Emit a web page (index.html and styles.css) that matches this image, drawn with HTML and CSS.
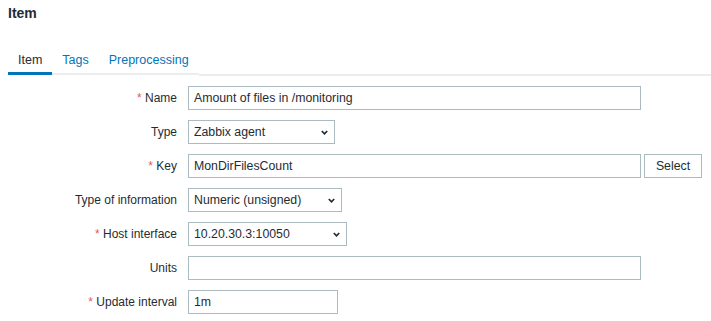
FILE: index.html
```html
<!DOCTYPE html>
<html>
<head>
<meta charset="utf-8">
<link rel="stylesheet" href="styles.css">
</head>
<body>
<h1 class="title">Item</h1>
<nav class="tabs">
  <span class="tab active">Item</span>
  <span class="tab">Tags</span>
  <span class="tab">Preprocessing</span>
  <span class="tab-rest"></span>
</nav>
<form class="form">
  <label class="label"><span class="req">*</span> Name</label>
  <div class="field"><div class="input w-std">Amount of files in /monitoring</div></div>

  <label class="label">Type</label>
  <div class="field"><div class="select w-type"><span>Zabbix agent</span><svg class="chev" width="7" height="5" viewBox="0 0 7 5"><path d="M0.8 1 L3.5 3.8 L6.2 1" fill="none" stroke="#1f2c33" stroke-width="1.7"/></svg></div></div>

  <label class="label"><span class="req">*</span> Key</label>
  <div class="field"><div class="input w-std">MonDirFilesCount</div><div class="btn">Select</div></div>

  <label class="label">Type of information</label>
  <div class="field"><div class="select w-info"><span>Numeric (unsigned)</span><svg class="chev" width="7" height="5" viewBox="0 0 7 5"><path d="M0.8 1 L3.5 3.8 L6.2 1" fill="none" stroke="#1f2c33" stroke-width="1.7"/></svg></div></div>

  <label class="label"><span class="req">*</span> Host interface</label>
  <div class="field"><div class="select w-host"><span>10.20.30.3:10050</span><svg class="chev" width="7" height="5" viewBox="0 0 7 5"><path d="M0.8 1 L3.5 3.8 L6.2 1" fill="none" stroke="#1f2c33" stroke-width="1.7"/></svg></div></div>

  <label class="label">Units</label>
  <div class="field"><div class="input w-std"></div></div>

  <label class="label"><span class="req">*</span> Update interval</label>
  <div class="field"><div class="input w-small">1m</div></div>
</form>
</body>
</html>
```
FILE: styles.css
```css
html, body {
  margin: 0;
  padding: 0;
  background: #ffffff;
}
body {
  font-family: "Liberation Sans", Arial, sans-serif;
  font-size: 12px;
  color: #1f2c33;
  width: 711px;
  height: 321px;
  overflow: hidden;
}
.title {
  margin: 0;
  padding: 5px 0 0 8px;
  height: 50px;
  box-sizing: border-box;
  font-size: 14px;
  font-weight: bold;
  line-height: 17px;
  color: #1f2c33;
}
.tabs {
  display: flex;
  align-items: flex-start;
  margin-left: 8px;
  height: 26px;
}
.tab {
  padding: 2px 10px 0 10px;
  height: 21px;
  font-size: 12.5px;
  line-height: 17px;
  color: #0275b8;
  border-bottom: 2px solid #ebeef0;
}
.tab.active {
  color: #1f2c33;
  border-bottom: 3px solid #0275b8;
  height: 20px;
}
.tab-rest {
  flex: 1;
  height: 24px;
  border-bottom: 2px solid #ebeef0;
}
.form {
  display: grid;
  grid-template-columns: 170px auto;
  column-gap: 10px;
  row-gap: 10px;
  margin-top: 10px;
  padding-left: 8px;
}
.label {
  text-align: right;
  line-height: 24px;
  height: 24px;
  padding-right: 1px;
}
.req {
  color: #e45959;
}
.field {
  display: flex;
  gap: 3px;
  height: 24px;
}
.input, .select, .btn {
  box-sizing: border-box;
  height: 24px;
  border: 1px solid #acbbc2;
  background: #ffffff;
  line-height: 22px;
  padding: 0 5px;
  font-size: 12.3px;
  color: #1f2c33;
  white-space: nowrap;
}
.w-std { width: 453px; }
.w-small { width: 150px; }
.select {
  display: flex;
  justify-content: space-between;
  align-items: center;
  padding-right: 6px;
}
.w-type { width: 147px; }
.w-info { width: 154px; }
.w-host { width: 159px; }
.chev { display: block; }
.btn {
  width: 58px;
  text-align: center;
  padding: 0;
}
```
